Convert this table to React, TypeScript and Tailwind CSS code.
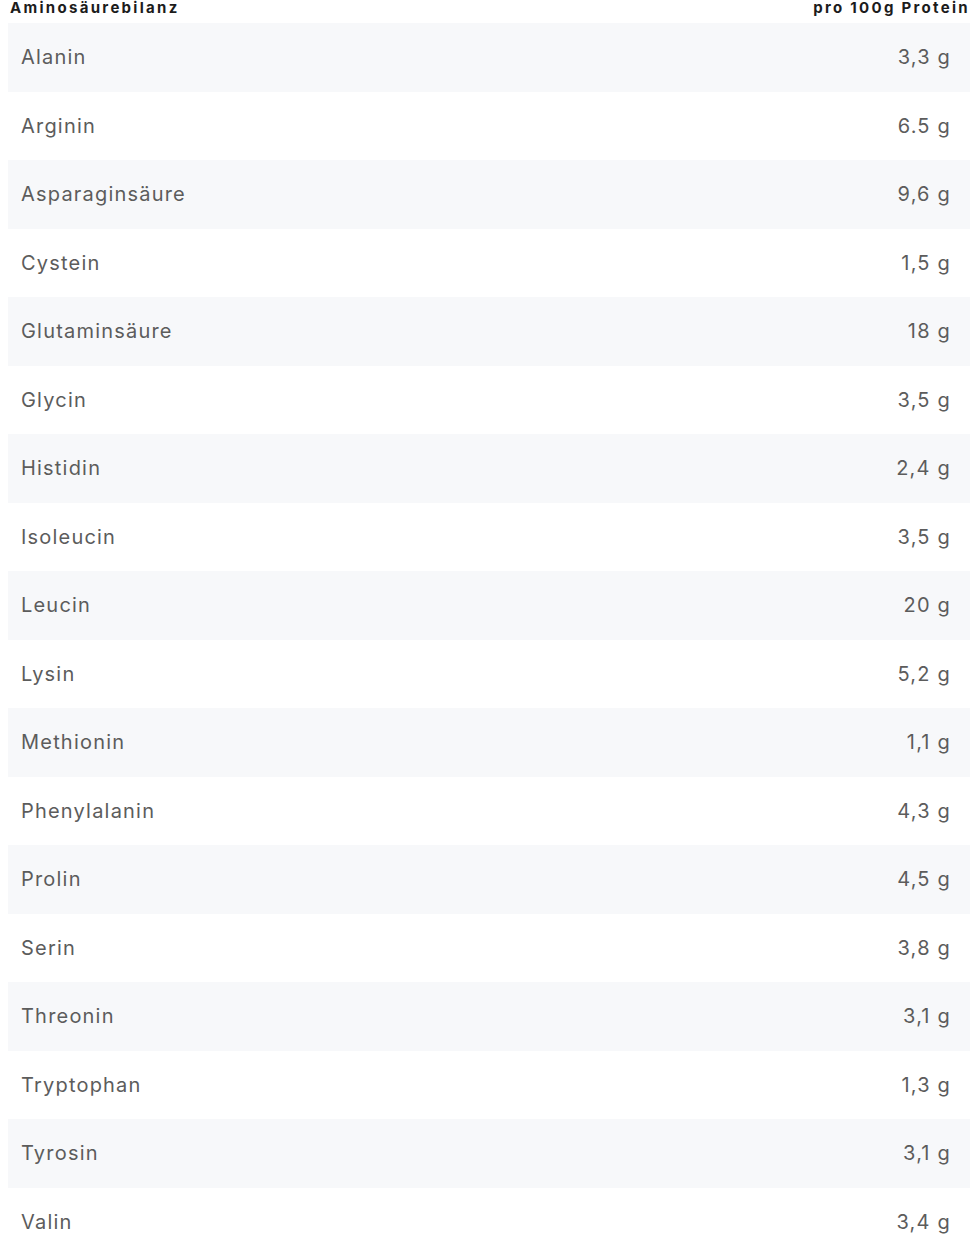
import React from 'react'

const rows: [string, string][] = [
  ['Alanin', '3,3 g'],
  ['Arginin', '6.5 g'],
  ['Asparaginsäure', '9,6 g'],
  ['Cystein', '1,5 g'],
  ['Glutaminsäure', '18 g'],
  ['Glycin', '3,5 g'],
  ['Histidin', '2,4 g'],
  ['Isoleucin', '3,5 g'],
  ['Leucin', '20 g'],
  ['Lysin', '5,2 g'],
  ['Methionin', '1,1 g'],
  ['Phenylalanin', '4,3 g'],
  ['Prolin', '4,5 g'],
  ['Serin', '3,8 g'],
  ['Threonin', '3,1 g'],
  ['Tryptophan', '1,3 g'],
  ['Tyrosin', '3,1 g'],
  ['Valin', '3,4 g']
]

const App: React.FC = () => {
  return (
    <div className="w-[976px] bg-white font-['Inter',sans-serif]">
      <div className="flex h-[23px] items-start justify-between pl-[10px] pr-[6px] text-[15px] font-bold leading-[16px] tracking-[2.3px] text-[#1c1c1c]">
        <span>Aminosäurebilanz</span>
        <span>pro 100g Protein</span>
      </div>
      <div className="pl-[8px] pr-[6px]">
        {rows.map(([name, value], i) => (
          <div
            key={name}
            className={`flex h-[68.5px] items-center justify-between pl-[13px] pr-[19px] text-[20px] tracking-[1.2px] text-[#5c5c5c] ${
              i % 2 === 0 ? 'bg-[#f7f8fa]' : 'bg-white'
            }`}
          >
            <span>{name}</span>
            <span>{value}</span>
          </div>
        ))}
      </div>
    </div>
  )
}

export default App
